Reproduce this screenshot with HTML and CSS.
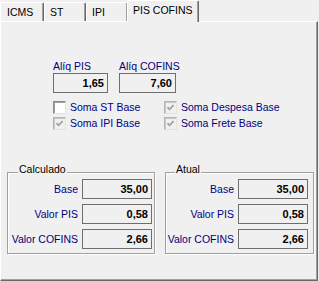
FILE: index.html
```html
<!DOCTYPE html>
<html lang="pt">
<head>
<meta charset="utf-8">
<title>PIS COFINS</title>
<link rel="stylesheet" href="styles.css">
</head>
<body>
<div class="tabctl">
  <div class="strip">
    <div class="tab t-icms">ICMS</div>
    <div class="tab t-st">ST</div>
    <div class="tab t-ipi">IPI</div>
    <div class="tab active">PIS COFINS</div>
  </div>
  <div class="page">
    <div class="rates">
      <div class="field f-pis">
        <div class="lbl">Alíq PIS</div>
        <div class="edit">1,65</div>
      </div>
      <div class="field f-cofins">
        <div class="lbl">Alíq COFINS</div>
        <div class="edit">7,60</div>
      </div>
    </div>
    <div class="checks">
      <div class="chk"><span class="box"></span><span class="ctext">Soma ST Base</span></div>
      <div class="chk"><span class="box on"><svg viewBox="0 0 11 11" width="11" height="11"><path d="M2.5 5.2 L4.5 7.3 L8.6 3.1" /></svg></span><span class="ctext">Soma Despesa Base</span></div>
      <div class="chk"><span class="box on"><svg viewBox="0 0 11 11" width="11" height="11"><path d="M2.5 5.2 L4.5 7.3 L8.6 3.1" /></svg></span><span class="ctext">Soma IPI Base</span></div>
      <div class="chk"><span class="box on"><svg viewBox="0 0 11 11" width="11" height="11"><path d="M2.5 5.2 L4.5 7.3 L8.6 3.1" /></svg></span><span class="ctext">Soma Frete Base</span></div>
    </div>
    <div class="groups">
      <div class="grp g-calc">
        <span class="cap">Calculado</span>
        <div class="rows">
          <div class="rl">Base</div><div class="edit">35,00</div>
          <div class="rl">Valor PIS</div><div class="edit">0,58</div>
          <div class="rl">Valor COFINS</div><div class="edit">2,66</div>
        </div>
      </div>
      <div class="grp g-atual">
        <span class="cap">Atual</span>
        <div class="rows">
          <div class="rl">Base</div><div class="edit">35,00</div>
          <div class="rl">Valor PIS</div><div class="edit">0,58</div>
          <div class="rl">Valor COFINS</div><div class="edit">2,66</div>
        </div>
      </div>
    </div>
  </div>
</div>
</body>
</html>
```

FILE: styles.css
```css
* { box-sizing: border-box; }
html, body { margin: 0; padding: 0; }
body {
  background: #f0f0f0;
  font-family: "Liberation Sans", Arial, sans-serif;
  font-size: 10.5px;
  color: #000;
  width: 319px;
  height: 281px;
  overflow: hidden;
}
.tabctl { width: 318px; }
.strip {
  display: flex;
  align-items: flex-end;
  height: 21px;
}
.tab {
  height: 19px;
  padding: 3px 0 0 5px;
  line-height: 13px;
  background: #f0f0f0;
  border-left: 1px solid #fff;
  border-top: 1px solid #fff;
  border-right: 1px solid #696969;
  box-shadow: inset -1px 0 0 #a0a0a0;
  border-top-left-radius: 2px;
  border-top-right-radius: 2px;
  white-space: nowrap;
}
.t-icms { width: 44px; padding-left: 6px; }
.t-st { width: 42px; }
.t-ipi { width: 42px; }
.tab.active {
  position: relative;
  z-index: 1;
  width: 72px;
  height: 22px;
  margin-left: -1px;
  margin-bottom: -1px;
}
.page {
  height: 260px;
  border-top: 1px solid #fff;
  border-left: 1px solid #fff;
  border-right: 1px solid #696969;
  border-bottom: 1px solid #696969;
  box-shadow: inset -1px -1px 0 #a0a0a0;
  padding-top: 38px;
}
.rates {
  display: flex;
  margin-left: 52px;
  gap: 11px;
}
.f-pis { width: 55px; }
.f-cofins { width: 57px; }
.lbl {
  color: #000080;
  line-height: 13px;
  height: 13px;
  white-space: nowrap;
}
.edit {
  height: 20px;
  border: 1px solid #6e6e6e;
  background: #f0f0f0;
  text-align: right;
  padding-right: 3px;
  font-weight: bold;
  font-size: 11px;
  line-height: 18px;
}
.checks {
  display: grid;
  grid-template-columns: 111px auto;
  grid-auto-rows: 16px;
  margin: 8px 0 0 52px;
}
.chk {
  display: flex;
  align-items: flex-start;
  color: #000080;
  white-space: nowrap;
}
.box {
  width: 13px;
  height: 13px;
  flex: none;
  margin-right: 4px;
  background: #fff;
  border: 1px solid;
  border-color: #8d8d8d #e3e3e3 #e3e3e3 #8d8d8d;
  box-shadow: inset 1px 1px 0 #a0a0a0;
}
.box.on {
  background: #f0f0f0;
  border-color: #b4b4b4 #e3e3e3 #e3e3e3 #b4b4b4;
  box-shadow: inset 1px 1px 0 #c8c8c8;
}
.box svg { display: block; }
.box svg path {
  fill: none;
  stroke: #a0a0a0;
  stroke-width: 1.7;
}
.ctext { line-height: 13px; }
.groups {
  display: flex;
  gap: 10px;
  margin: 39px 0 0 6px;
}
.grp {
  position: relative;
  border: 1px solid #a0a0a0;
  box-shadow: inset 1px 1px 0 #fff, 1px 1px 0 #fff;
  padding-top: 6px;
  padding-bottom: 4px;
}
.g-calc { width: 148px; padding-right: 2px; }
.g-atual { width: 149px; padding-right: 5px; }
.cap {
  position: absolute;
  top: -10px;
  left: 10px;
  padding: 0 1px;
  line-height: 13px;
  background: #f0f0f0;
}
.g-atual .cap { left: 9px; }
.rows {
  display: grid;
  grid-template-columns: 1fr 70px;
  grid-auto-rows: 20px;
  column-gap: 4px;
  row-gap: 5px;
}
.rl {
  color: #000080;
  text-align: right;
  line-height: 20px;
  white-space: nowrap;
}
```
